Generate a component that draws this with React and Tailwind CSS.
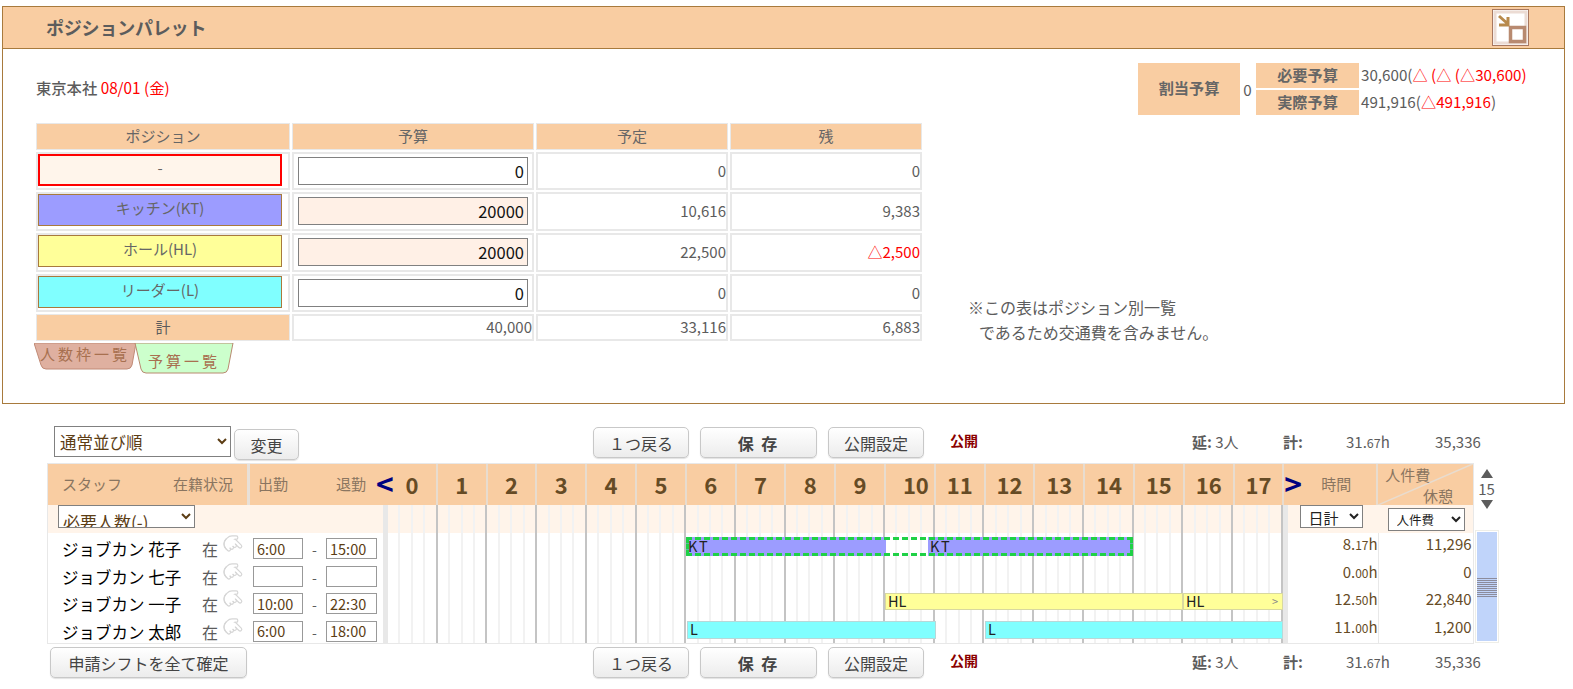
import React from 'react';
import { Pointer } from 'lucide-react';

const hours = Array.from({ length: 18 }, (_, i) => i);

const staff = [
  { name: 'ジョブカン 花子', start: '6:00', end: '15:00', time: ['8.', '17'], cost: '11,296' },
  { name: 'ジョブカン 七子', start: '', end: '', time: ['0.', '00'], cost: '0' },
  { name: 'ジョブカン 一子', start: '10:00', end: '22:30', time: ['12.', '50'], cost: '22,840' },
  { name: 'ジョブカン 太郎', start: '6:00', end: '18:00', time: ['11.', '00'], cost: '1,200' },
];

const positions = [
  { label: '-', swatch: 'bg-[#fff5eb] border-2 border-[#ff0000]', inputBg: 'bg-white', value: '0', planned: '0', left: '0' },
  { label: 'キッチン(KT)', swatch: 'bg-[#9c9cff] border border-[#a87a3d]', inputBg: 'bg-[#fff0e6]', value: '20000', planned: '10,616', left: '9,383' },
  { label: 'ホール(HL)', swatch: 'bg-[#ffff99] border border-[#a87a3d]', inputBg: 'bg-[#fff0e6]', value: '20000', planned: '22,500', left: '△2,500', red: true },
  { label: 'リーダー(L)', swatch: 'bg-[#80ffff] border border-[#a87a3d]', inputBg: 'bg-white', value: '0', planned: '0', left: '0' },
];

function HeadCell({ children }) {
  return (
    <div className="h-[27px] flex items-center justify-center bg-[#f9cda2] border border-[#e8e8e8] text-[#666666] text-[15px]">
      {children}
    </div>
  );
}

function NumCell({ children, red }) {
  return (
    <div className={`flex items-center justify-end border-2 border-[#e8e8e8] text-[15px] ${red ? 'text-[#ff0000]' : 'text-[#5c5c5c]'}`}>
      {children}
    </div>
  );
}

function PaletteIcon() {
  return (
    <svg width="37" height="37" viewBox="0 0 37 37" className="block">
      <rect x="0.5" y="0.5" width="36" height="36" fill="#ffffff" stroke="#a87860" />
      <path d="M3 3h31v31h-31z" fill="none" stroke="#ecdcd4" strokeWidth="3" />
      <rect x="18.5" y="18.5" width="14" height="14" fill="#ffffff" stroke="#b88a70" strokeWidth="3.5" />
      <path d="M7 7l9 8M16 8v8h-9" fill="none" stroke="#b88a4c" strokeWidth="3" />
    </svg>
  );
}

function Tab({ label, active }) {
  return (
    <div className={`relative ${active ? 'w-[100px] h-[31px] -ml-[2px]' : 'w-[102px] h-[27px]'}`}>
      <svg className="absolute inset-0 w-full h-full" viewBox={active ? '0 0 100 31' : '0 0 102 27'}>
        {active ? (
          <path d="M1 0h98l-5 26q-1 4-5 4H12q-4 0-5-4z" fill="#ccffcc" stroke="#b88a70" strokeWidth="1" />
        ) : (
          <path d="M0 0h102l-4 22q-1 4-5 4H12q-4 0-5-4z" fill="#dfb0a0" stroke="#c08a76" strokeWidth="1" />
        )}
      </svg>
      <span className={`relative flex justify-center tracking-[3px] text-[15px] leading-[20px] text-[#a87050] ${active ? 'pt-[8px]' : 'pt-[1px]'}`}>
        {label}
      </span>
    </div>
  );
}

function Palette() {
  return (
    <section className="ml-[2px] w-[1563px] h-[398px] border border-[#a87a3d] flex flex-col">
      <header className="h-[42px] shrink-0 bg-[#f9cda2] border-b-[1px] border-[#a87a3d] flex items-center justify-between pl-[43px] pr-[35px]">
        <h1 className="text-[18px] font-bold text-[#5c5c5c] tracking-[-0.2px]">ポジションパレット</h1>
        <PaletteIcon />
      </header>
      <div className="flex flex-1">
        <div className="ml-[33px] w-[886px] pt-[27px]">
          <p className="h-[46px] text-[15.3px] font-medium text-[#5c5c5c]">
            東京本社 <span className="text-[#ff0000] font-normal">08/01 (金)</span>
          </p>
          <div className="grid grid-cols-[254px_242px_192px_192px] grid-rows-[27px_38px_39px_39px_38px_27px] gap-[2px] mt-[1px]">
            <HeadCell>ポジション</HeadCell>
            <HeadCell>予算</HeadCell>
            <HeadCell>予定</HeadCell>
            <HeadCell>残</HeadCell>
            {positions.map((p) => (
              <React.Fragment key={p.label}>
                <div className="border-2 border-[#e8e8e8] pr-[6px] flex items-start">
                  <div className={`w-full h-[32px] pb-[4px] flex items-center justify-center text-[15px] text-[#666666] ${p.swatch}`}>
                    {p.label}
                  </div>
                </div>
                <div className="border-2 border-[#e8e8e8] px-[4px] pt-[3px] flex items-start">
                  <input
                    readOnly
                    value={p.value}
                    className={`w-full h-[28px] border border-[#808080] px-[3px] text-right text-[16.5px] text-[#111111] ${p.inputBg}`}
                  />
                </div>
                <NumCell>{p.planned}</NumCell>
                <NumCell red={p.red}>{p.left}</NumCell>
              </React.Fragment>
            ))}
            <div className="h-[27px] flex items-center justify-center bg-[#f9cda2] border border-[#e8e8e8] text-[15px] text-[#5c5c5c]">計</div>
            <NumCell>40,000</NumCell>
            <NumCell>33,116</NumCell>
            <NumCell>6,883</NumCell>
          </div>
          <div className="flex items-start mt-[2px] -ml-[2px]">
            <Tab label="人数枠一覧" />
            <Tab label="予算一覧" active />
          </div>
        </div>
        <div className="flex-1 flex flex-col">
          <div className="flex items-center justify-end mt-[14px] mr-[24px] text-[15.2px] text-[#5c5c5c]">
            <div className="w-[102px] h-[52px] pb-[3px] flex items-center justify-center bg-[#f9cda2] font-bold text-[#666666]">割当予算</div>
            <span className="w-[15px] text-center">0</span>
            <div className="flex flex-col gap-[2px] ml-[1px]">
              <div className="flex items-center h-[25px]">
                <div className="w-[103px] h-full pb-[2px] flex items-center justify-center bg-[#f9cda2] font-bold text-[#666666]">必要予算</div>
                <span className="w-[181px] pl-[2px] pb-[2px]">30,600(<span className="text-[#ff0000]">△ (△ (△30,600)</span></span>
              </div>
              <div className="flex items-center h-[25px]">
                <div className="w-[103px] h-full pb-[2px] flex items-center justify-center bg-[#f9cda2] font-bold text-[#666666]">実際予算</div>
                <span className="w-[181px] pl-[2px] pb-[2px]">491,916(<span className="text-[#ff0000]">△491,916</span>)</span>
              </div>
            </div>
          </div>
          <div className="mt-[180px] ml-[46px] text-[16px] leading-[25px] text-[#5c5c5c]">
            <p>※この表はポジション別一覧</p>
            <p className="pl-[11px]">であるため交通費を含みません。</p>
          </div>
        </div>
      </div>
    </section>
  );
}

function GrayButton({ className, children }) {
  return (
    <button className={`flex items-center justify-center rounded-[5px] border border-[#c8c8c8] bg-gradient-to-b from-white to-[#ececec] shadow-[0_1px_1px_rgba(0,0,0,0.12)] text-[16px] text-[#444444] ${className}`}>
      {children}
    </button>
  );
}

function Actions() {
  return (
    <>
      <GrayButton className="w-[96px] h-[31px]">１つ戻る</GrayButton>
      <GrayButton className="w-[117px] h-[31px] ml-[11px] font-bold tracking-[2px]">保 存</GrayButton>
      <GrayButton className="w-[96px] h-[31px] ml-[11px]">公開設定</GrayButton>
      <span className="w-[29px] ml-[26px] text-[14px] font-bold text-[#8b0000] leading-[26px]">公開</span>
      <div className="w-[295px] ml-[213px] h-[31px] flex items-center text-[15px] text-[#5c5c5c]">
        <span className="w-[91px]"><b className="font-bold">延:</b> 3人</span>
        <span className="w-[63px] font-bold">計:</span>
        <span className="w-[89px]">31.<span className="text-[12.5px]">67</span>h</span>
        <span>35,336</span>
      </div>
    </>
  );
}

// the chart's hour columns, each cut into quarter hours
function HourGrid() {
  return (
    <div className="flex w-[894.6px] h-full">
      {hours.map((h) => (
        <div key={h} className="flex flex-1 h-full">
          <div className="flex-1 border-r-2 border-[#f2f2f2]" />
          <div className="flex-1 border-r-2 border-[#f2f2f2]" />
          <div className="flex-1 border-r-2 border-[#f2f2f2]" />
          <div className="flex-1 border-r-2 border-[#c4c4c4]" />
        </div>
      ))}
    </div>
  );
}

function Bar({ className, label, children }) {
  return (
    <div className={`absolute flex items-center pl-[2px] text-[14.5px] leading-none text-[#222222] ${className}`}>
      {label}
      {children}
    </div>
  );
}

function StaffRow({ person, index }) {
  return (
    <div className="flex h-[27.5px]">
      <div className="w-[335px] flex items-start pt-[5px] text-[#5c5c5c]">
        <span className="w-[154px] pl-[14px] text-[16.5px] leading-[22px] text-black whitespace-nowrap">{person.name}</span>
        <span className="w-[21px] text-[16px] leading-[22px]">在</span>
        <Pointer size={20} strokeWidth={1.4} className="text-[#d6d6d6] rotate-[135deg] -mt-[4px]" />
        <input readOnly value={person.start} className="w-[50px] h-[21px] ml-[10px] border border-[#999999] pl-[3px] text-[14.5px] text-[#5c3d14]" />
        <span className="w-[23px] text-center text-[14px] leading-[22px]">-</span>
        <input readOnly value={person.end} className="w-[51px] h-[21px] border border-[#999999] pl-[3px] text-[14.5px] text-[#5c3d14]" />
      </div>
      <div className="w-[5px] bg-[#e8e8e8]" />
      <div className="relative">
        <HourGrid />
        {index === 0 && (
          <>
            <Bar label="KT" className="left-[298px] top-[4px] w-[200px] h-[19px] bg-[#9c9cff] tracking-[2px]" />
            <Bar label="KT" className="left-[540px] top-[4px] w-[205px] h-[19px] bg-[#9c9cff] tracking-[2px]" />
            <div className="absolute left-[298px] top-[4px] w-[447px] h-[19px] border-[3px] border-dashed border-[#1fd146] rounded-[1px]" />
          </>
        )}
        {index === 2 && (
          <>
            <Bar label="HL" className="left-[497px] top-[5px] w-[298px] h-[17px] bg-[#ffff99] border border-[#d8d8a0]" />
            <Bar label="HL" className="left-[795px] top-[5px] w-[100px] h-[17px] bg-[#ffff99] border border-[#d8d8a0]">
              <span className="ml-auto mr-[4px] text-[11px] text-[#888888]">&gt;</span>
            </Bar>
          </>
        )}
        {index === 3 && (
          <>
            <Bar label="L" className="left-[299px] top-[5px] w-[249px] h-[18px] bg-[#80ffff] border border-[#b8d8d8]" />
            <Bar label="L" className="left-[597px] top-[5px] w-[298px] h-[18px] bg-[#80ffff] border border-[#b8d8d8]" />
          </>
        )}
      </div>
      <div className="w-[5px] bg-[#e8e8e8]" />
      <div className="w-[91px] border-r border-[#e8e8e8] text-right text-[15px] text-[#664b25]">
        {person.time[0]}<span className="text-[12px]">{person.time[1]}</span>h
      </div>
      <div className="w-[94px] text-right pr-[1px] text-[15px] text-[#664b25]">{person.cost}</div>
    </div>
  );
}

function Timeline() {
  return (
    <div className="flex ml-[47px]">
      <div className="w-[1427px] border border-[#e8e8e8]">
        <div className="flex h-[41px] bg-[#f9cda2] text-[#8a7560] text-[15px]">
          <div className="w-[202px] flex items-center justify-between pl-[14px] pr-[14px] border-r-[3px] border-[#e8e0d8]">
            <span>スタッフ</span>
            <span>在籍状況</span>
          </div>
          <div className="w-[138px] flex items-center pl-[8px] whitespace-nowrap">
            <span className="shrink-0">出勤</span>
            <span className="shrink-0 ml-[48px]">退勤</span>
            <span className="shrink-0 ml-[10px] text-[30px] font-bold text-[#000080] leading-none -mt-[4px]">&lt;</span>
          </div>
          <div className="flex">
            {hours.map((h) => (
              <div
                key={h}
                className={`w-[49.8px] shrink-0 flex items-center justify-center text-[22px] font-bold text-[#664b25] border-r-[2px] border-[#e8dccf] ${h === 10 ? 'pl-[12px]' : ''}`}
              >
                {h}
              </div>
            ))}
          </div>
          <div className="w-[94px] flex items-center justify-between pr-[25px] border-r-[2px] border-[#e8dccf]">
            <span className="text-[30px] font-bold text-[#000080] leading-none -mt-[4px]">&gt;</span>
            <span>時間</span>
          </div>
          <div className="relative flex-1">
            <svg className="absolute inset-0 w-full h-full" viewBox="0 0 95 41" preserveAspectRatio="none">
              <path d="M0 41L95 0" stroke="#e8dccf" strokeWidth="1.5" />
            </svg>
            <span className="absolute left-[7px] top-0">人件費</span>
            <span className="absolute right-[20px] bottom-[-2px]">休憩</span>
          </div>
        </div>
        <div className="flex h-[28px] bg-[#fff4ea]">
          <div className="w-[335px] pl-[10px]">
            <select className="w-[137px] h-[23px] bg-white border border-[#808080] text-[17px] text-[#5c3d14] pt-[2px]">
              <option>必要人数(-)</option>
            </select>
          </div>
          <div className="w-[5px] bg-[#e8e8e8]" />
          <HourGrid />
          <div className="w-[5px] bg-[#e8e8e8]" />
          <div className="w-[91px] pl-[12px]">
            <select className="w-[63px] h-[23px] bg-white border border-[#808080] text-[15px] text-[#222222] pl-[4px]">
              <option>日計</option>
            </select>
          </div>
          <div className="pl-[9px] pt-[1px]">
            <select className="w-[77px] h-[23px] bg-white border border-[#808080] text-[12.5px] text-[#222222] pl-[4px]">
              <option>人件費</option>
            </select>
          </div>
        </div>
        {staff.map((person, i) => (
          <StaffRow key={person.name} person={person} index={i} />
        ))}
      </div>
      <div className="w-[25px] flex flex-col items-center">
        <div className="h-[67px] flex flex-col items-center pt-[6px] text-[15px] text-[#5c5c5c] leading-[16px]">
          <span className="w-0 h-0 border-x-[6px] border-x-transparent border-b-[9px] border-b-[#5c5c5c]" />
          <span className="my-[3px]">15</span>
          <span className="w-0 h-0 border-x-[6px] border-x-transparent border-t-[9px] border-t-[#5c5c5c]" />
        </div>
        <div className="w-[24px] h-[113px] border border-[#eeeee8] p-[1px]">
          <div className="h-full bg-[#c0d4fa] pt-[46px]">
            <div className="h-[19px] bg-[repeating-linear-gradient(0deg,#8c8c9c_0,#8c8c9c_1px,transparent_1px,transparent_2px)]" />
          </div>
        </div>
      </div>
    </div>
  );
}

export default function App() {
  return (
    <div className="pt-[6px] w-[1573px] h-[689px] overflow-hidden bg-white font-['Noto_Sans_CJK_JP','Noto_Sans',sans-serif]">
      <Palette />
      <div className="flex items-start h-[37px] mt-[22px]">
        <div className="ml-[54px] w-[539px] flex items-start gap-[3px]">
          <select className="w-[177px] h-[31px] bg-white border border-[#808080] text-[16.5px] text-[#5c3d14] pl-[1px]">
            <option>通常並び順</option>
          </select>
          <GrayButton className="w-[65px] h-[31px] mt-[3px]">変更</GrayButton>
        </div>
        <div className="flex items-start mt-[1px]">
          <Actions />
        </div>
      </div>
      <Timeline />
      <div className="flex items-start mt-[3px]">
        <div className="ml-[50px] w-[543px]">
          <GrayButton className="w-[197px] h-[31px]">申請シフトを全て確定</GrayButton>
        </div>
        <Actions />
      </div>
    </div>
  );
}
